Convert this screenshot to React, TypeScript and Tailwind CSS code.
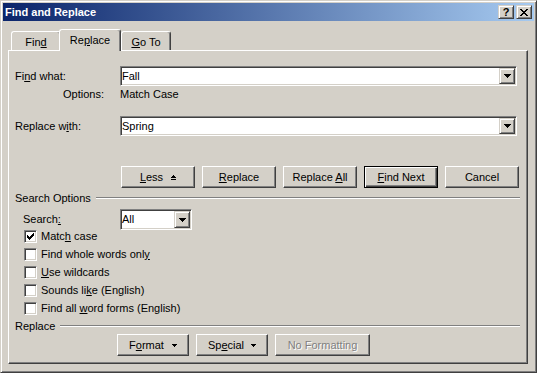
import React from "react";

// win2000 bevels
const raised =
  "border border-t-white border-l-white border-r-[#404040] border-b-[#404040] shadow-[inset_-1px_-1px_#808080]";
const frame =
  "border border-t-[#d4d0c8] border-l-[#d4d0c8] border-r-[#404040] border-b-[#404040] shadow-[inset_1px_1px_#fff,inset_-1px_-1px_#808080]";
const sunken =
  "border border-t-[#808080] border-l-[#808080] border-r-white border-b-white shadow-[inset_1px_1px_#404040,inset_-1px_-1px_#d4d0c8]";

function DownArrow() {
  return (
    <svg width="7" height="4" viewBox="0 0 7 4" shapeRendering="crispEdges">
      <path d="M0 0h7v1h-7z M1 1h5v1h-5z M2 2h3v1h-3z M3 3h1v1h-1z" fill="#000" />
    </svg>
  );
}

function SmallDown() {
  return (
    <svg width="5" height="3" viewBox="0 0 5 3" shapeRendering="crispEdges">
      <path d="M0 0h5v1h-5z M1 1h3v1h-3z M2 2h1v1h-1z" fill="#000" />
    </svg>
  );
}

function LessIcon() {
  return (
    <svg width="5" height="5" viewBox="0 0 5 5" shapeRendering="crispEdges">
      <path d="M2 0h1v1h-1z M1 1h3v1h-3z M0 2h5v1h-5z M0 4h5v1h-5z" fill="#000" />
    </svg>
  );
}

function Check() {
  return (
    <svg width="7" height="7" viewBox="0 0 7 7" shapeRendering="crispEdges">
      <path
        d="M6 0h1v1h-1z M5 1h2v1h-2z M0 2h1v1h-1z M4 2h3v1h-3z M0 3h2v1h-2z M3 3h3v1h-3z M0 4h5v1h-5z M1 5h3v1h-3z M2 6h1v1h-1z"
        fill="#000"
      />
    </svg>
  );
}

function CloseGlyph() {
  return (
    <svg width="8" height="7" viewBox="0 0 8 7" shapeRendering="crispEdges">
      <path
        d="M0 0h2v1h-2z M6 0h2v1h-2z M1 1h2v1h-2z M5 1h2v1h-2z M2 2h4v1h-4z M3 3h2v1h-2z M2 4h4v1h-4z M1 5h2v1h-2z M5 5h2v1h-2z M0 6h2v1h-2z M6 6h2v1h-2z"
        fill="#000"
      />
    </svg>
  );
}

function Combo({ value, className }: { value: string; className: string }) {
  return (
    <div className={`flex bg-white ${sunken} ${className}`}>
      <span className="flex-1 flex items-center pl-[1px] text-black">{value}</span>
      <span className={`w-[16px] my-[1px] mr-[1px] flex items-center justify-center bg-[#d4d0c8] ${frame}`}>
        <DownArrow />
      </span>
    </div>
  );
}

function Btn({
  children,
  className,
  isDefault,
}: {
  children: React.ReactNode;
  className: string;
  isDefault?: boolean;
}) {
  return (
    <div
      className={`flex items-center justify-center h-[22px] ${
        isDefault
          ? "border border-black shadow-[inset_1px_1px_#fff,inset_-1px_-1px_#404040,inset_-2px_-2px_#808080]"
          : raised
      } ${className}`}
    >
      {children}
    </div>
  );
}

function CheckRow({ checked, children }: { checked?: boolean; children: React.ReactNode }) {
  return (
    <div className="flex items-start h-[18px] pl-[15px] gap-[4px]">
      <span className={`w-[13px] h-[13px] bg-white flex items-center justify-center ${sunken}`}>
        {checked && <Check />}
      </span>
      <span className="leading-[13px]">{children}</span>
    </div>
  );
}

function GroupLine({ label, className }: { label: string; className: string }) {
  return (
    <div className={`flex items-center pl-[6px] pr-[7px] ${className}`}>
      <span>{label}</span>
      <div className="flex-1 ml-[5px] h-[2px] border-t border-t-[#808080] border-b border-b-white" />
    </div>
  );
}

export default function App() {
  return (
    <div
      className={`w-[537px] h-[373px] p-[2px] bg-[#d4d0c8] text-[11px] leading-[13px] text-black font-['Liberation_Sans',Arial,sans-serif] ${frame}`}
    >
      {/* Title bar */}
      <div className="h-[18px] flex items-center pl-[2px] pr-[2px] bg-[linear-gradient(to_right,#0a246a,#a6caf0)]">
        <span className="flex-1 text-white font-bold text-[11px]">Find and Replace</span>
        <span className={`w-[16px] h-[14px] flex items-center justify-center bg-[#d4d0c8] font-bold text-[11px] leading-none ${frame}`}>
          ?
        </span>
        <span className={`w-[16px] h-[14px] ml-[2px] flex items-center justify-center bg-[#d4d0c8] ${frame}`}>
          <CloseGlyph />
        </span>
      </div>

      <div className="ml-[5px] mt-[8px]">
        {/* Tabs */}
        <div className="flex items-end h-[21px] pl-[3px]">
          <div className="w-[50px] h-[19px] pt-[2px] flex items-center justify-center border-t border-l border-r border-t-white border-l-white border-r-[#404040] rounded-t-[3px] shadow-[inset_-1px_0_#808080]">
            <span>
              Fin<u>d</u>
            </span>
          </div>
          <div className="w-[62px] h-[22px] -mb-[1px] -ml-[2px] relative z-10 bg-[#d4d0c8] flex items-center justify-center border-t border-l border-r border-t-white border-l-white border-r-[#404040] rounded-t-[3px] shadow-[inset_-1px_0_#808080]">
            <span>
              Re<u>p</u>lace
            </span>
          </div>
          <div className="w-[50px] h-[19px] pt-[2px] flex items-center justify-center border-t border-l border-r border-t-white border-l-white border-r-[#404040] rounded-t-[3px] shadow-[inset_-1px_0_#808080]">
            <span>
              <u>G</u>o To
            </span>
          </div>
        </div>

        {/* Panel */}
        <div className={`w-[520px] h-[314px] flex flex-col ${raised}`}>
          <div className="flex items-center h-[20px] mt-[15px] pl-[6px]">
            <span className="w-[105px]">
              Fi<u>n</u>d what:
            </span>
            <Combo value="Fall" className="w-[397px] h-[20px]" />
          </div>
          <div className="flex items-center h-[16px] pl-[6px]">
            <span className="w-[89px] text-right">Options:</span>
            <span className="ml-[16px]">Match Case</span>
          </div>
          <div className="flex items-center h-[20px] mt-[14px] pl-[6px]">
            <span className="w-[105px]">
              Replace w<u>i</u>th:
            </span>
            <Combo value="Spring" className="w-[397px] h-[20px]" />
          </div>

          <div className="flex mt-[30px] pl-[112px] gap-[7px]">
            <Btn className="w-[74px] gap-[8px]">
              <span>
                <u>L</u>ess
              </span>
              <LessIcon />
            </Btn>
            <Btn className="w-[74px]">
              <span>
                <u>R</u>eplace
              </span>
            </Btn>
            <Btn className="w-[74px]">
              <span>
                Replace <u>A</u>ll
              </span>
            </Btn>
            <Btn className="w-[74px]" isDefault>
              <span>
                <u>F</u>ind Next
              </span>
            </Btn>
            <Btn className="w-[74px]">
              <span>Cancel</span>
            </Btn>
          </div>

          <GroupLine label="Search Options" className="h-[14px] mt-[3px]" />

          <div className="flex items-center h-[21px] mt-[4px] pl-[14px]">
            <span className="w-[97px]">
              Search<u>:</u>
            </span>
            <Combo value="All" className="w-[72px] h-[21px]" />
          </div>

          <CheckRow checked>
            Matc<u>h</u> case
          </CheckRow>
          <CheckRow>
            Find whole words onl<u>y</u>
          </CheckRow>
          <CheckRow>
            <u>U</u>se wildcards
          </CheckRow>
          <CheckRow>
            Sounds li<u>k</u>e (English)
          </CheckRow>
          <CheckRow>
            Find all <u>w</u>ord forms (English)
          </CheckRow>

          <GroupLine label="Replace" className="h-[12px]" />

          <div className="flex mt-[2px] pl-[108px] gap-[7px]">
            <Btn className="w-[72px] gap-[8px]">
              <span>
                F<u>o</u>rmat
              </span>
              <SmallDown />
            </Btn>
            <Btn className="w-[72px] gap-[7px]">
              <span>
                Sp<u>e</u>cial
              </span>
              <SmallDown />
            </Btn>
            <Btn className="w-[95px]">
              <span className="text-[#808080] [text-shadow:1px_1px_#fff]">No Formatting</span>
            </Btn>
          </div>
        </div>
      </div>
    </div>
  );
}
